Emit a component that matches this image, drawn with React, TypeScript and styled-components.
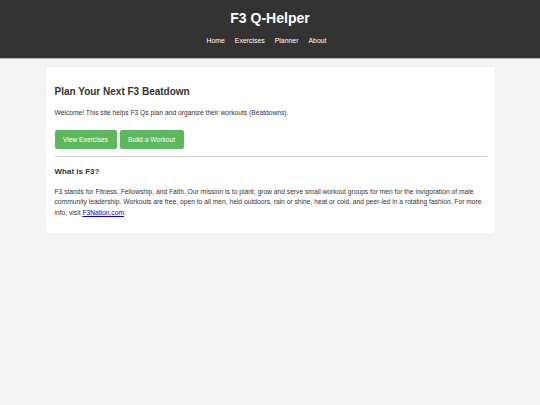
import { createGlobalStyle, styled } from "styled-components";

const GlobalStyle = createGlobalStyle`
  html, body {
    margin: 0;
    padding: 0;
    background: #f4f4f4;
    font-family: "Liberation Sans", Arial, sans-serif;
    color: #333;
  }
`;

const Header = styled.header`
  background: #333;
  color: #fff;
  height: 59px;
  box-sizing: border-box;
  padding-top: 9.5px;
  border-bottom: 1px solid #b5b5b5;
  text-align: center;
`;

const Title = styled.h1`
  margin: 0;
  font-size: 14px;
  line-height: 16px;
  font-weight: bold;
`;

const Nav = styled.nav`
  display: flex;
  justify-content: center;
  gap: 10px;
  margin-top: 11px;
  padding-right: 7px;
  font-size: 6.9px;
  line-height: 8px;
  a {
    color: #fff;
    text-decoration: none;
  }
`;

const Main = styled.main`
  max-width: 449px;
  margin: 8px auto 0;
  background: #fff;
  border-radius: 3px;
  padding: 10px 8px 15px 9px;
  box-sizing: border-box;
  box-shadow: 0 0 2px rgba(0, 0, 0, 0.06);
`;

const Heading = styled.h2`
  margin: 9px 0 0;
  font-size: 10px;
  line-height: 12px;
  font-weight: bold;
`;

const Text = styled.p<{ $top: number }>`
  margin: ${(p) => p.$top}px 0 0;
  font-size: 6.7px;
  line-height: 10.3px;
  a {
    color: #0000ee;
  }
`;

const Actions = styled.div`
  display: flex;
  gap: 3px;
  margin-top: 12.5px;
`;

const Button = styled.a<{ $w: number }>`
  display: flex;
  align-items: center;
  justify-content: center;
  width: ${(p) => p.$w}px;
  height: 19px;
  background: #5cb85c;
  color: #fff;
  border-radius: 2px;
  font-size: 6.7px;
  text-decoration: none;
`;

const Rule = styled.hr`
  border: none;
  border-top: 1px solid #ccc;
  margin: 7px 0 0;
`;

const SubHeading = styled.h3`
  margin: 9.5px 0 0;
  font-size: 8px;
  line-height: 9.2px;
  font-weight: bold;
`;

export default function App() {
  return (
    <>
      <GlobalStyle />
      <Header>
        <Title>F3 Q-Helper</Title>
        <Nav>
          <a href="#">Home</a>
          <a href="#">Exercises</a>
          <a href="#">Planner</a>
          <a href="#">About</a>
        </Nav>
      </Header>
      <Main>
        <Heading>Plan Your Next F3 Beatdown</Heading>
        <Text $top={9.7}>
          Welcome! This site helps F3 Qs plan and organize their workouts (Beatdowns).
        </Text>
        <Actions>
          <Button href="#" $w={62}>View Exercises</Button>
          <Button href="#" $w={64}>Build a Workout</Button>
        </Actions>
        <Rule />
        <SubHeading>What is F3?</SubHeading>
        <Text $top={11}>
          F3 stands for Fitness, Fellowship, and Faith. Our mission is to plant, grow and serve
          small workout groups for men for the invigoration of male community leadership.
          Workouts are free, open to all men, held outdoors, rain or shine, heat or cold, and
          peer-led in a rotating fashion. For more info, visit <a href="#">F3Nation.com</a>.
        </Text>
      </Main>
    </>
  );
}
